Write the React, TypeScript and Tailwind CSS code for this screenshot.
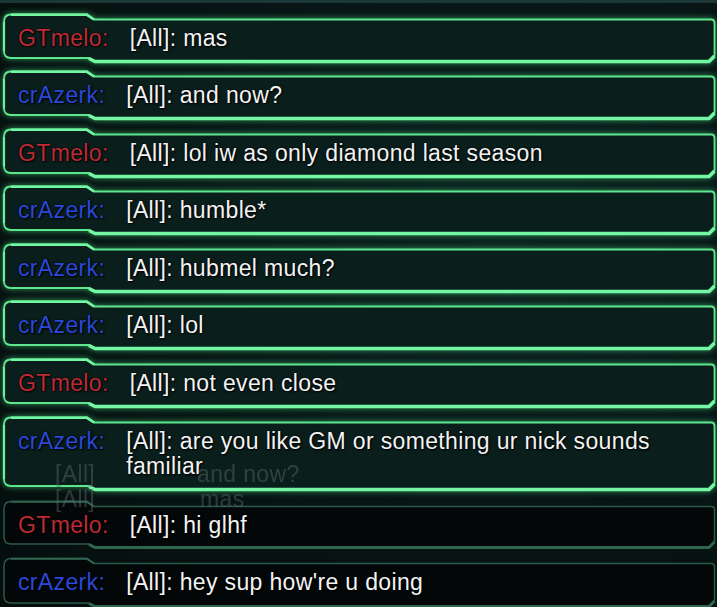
import React from "react";

type Msg = {
  name: string;
  color: "red" | "blue";
  lines: string[];
  mt: number;
  h: number;
  dim?: boolean;
};

const rows: Msg[] = [
  { name: "GTmelo:", color: "red", lines: ["[All]: mas"], mt: 13, h: 51 },
  { name: "crAzerk:", color: "blue", lines: ["[All]: and now?"], mt: 6, h: 51 },
  { name: "GTmelo:", color: "red", lines: ["[All]: lol iw as only diamond last season"], mt: 7, h: 51 },
  { name: "crAzerk:", color: "blue", lines: ["[All]: humble*"], mt: 6, h: 51 },
  { name: "crAzerk:", color: "blue", lines: ["[All]: hubmel much?"], mt: 7, h: 51 },
  { name: "crAzerk:", color: "blue", lines: ["[All]: lol"], mt: 6, h: 51 },
  { name: "GTmelo:", color: "red", lines: ["[All]: not even close"], mt: 7, h: 51 },
  {
    name: "crAzerk:",
    color: "blue",
    lines: ["[All]: are you like GM or something ur nick sounds", "familiar"],
    mt: 7,
    h: 76,
  },
  { name: "GTmelo:", color: "red", lines: ["[All]: hi glhf"], mt: 8, h: 50, dim: true },
  { name: "crAzerk:", color: "blue", lines: ["[All]: hey sup how're u doing"], mt: 7, h: 52, dim: true },
];

const W = 713;

function Frame({ h, dim }: { h: number; dim?: boolean }) {
  const stroke = dim ? "#2b5a48" : "#5ee68e";
  const bar = dim ? "#2f6650" : "#74f7a2";
  const fill = dim ? "#030707" : "#0a1f1c";
  const body = `M 1,9 Q 1,1.5 8,1.5 L 84,1.5 L 91,6.5 L ${W - 5},6.5 Q ${W - 1.5},6.5 ${W - 1.5},10 L ${W - 1.5},${h - 9} L ${W - 7},${h - 2.5} L 92,${h - 2.5} L 86,${h - 6} L 8,${h - 6} Q 1,${h - 6} 1,${h - 13} Z`;
  return (
    <svg
      className={
        "absolute inset-0 overflow-visible " +
        (dim ? "" : "drop-shadow-[0_0_3px_rgba(70,230,130,0.6)]")
      }
      width={W}
      height={h}
      viewBox={`0 0 ${W} ${h}`}
    >
      <path d={body} fill={fill} stroke={stroke} strokeWidth={dim ? 1.5 : 1.8} />
      <path d={`M 8,1.8 L 84,1.8 L 91,6.5`} fill="none" stroke={bar} strokeWidth={dim ? 2 : 2.6} />
      <path
        d={`M 86,${h - 5.5} L 92,${h - 2.5} L ${W - 7},${h - 2.5} L ${W - 1.5},${h - 8}`}
        fill="none"
        stroke={bar}
        strokeWidth={dim ? 3 : 3.6}
        strokeLinejoin="round"
      />
      {!dim && (
        <path d={`M 1,9 L 1,${h - 13}`} fill="none" stroke="#6cf09a" strokeWidth={2.2} />
      )}
    </svg>
  );
}

function Row({ m }: { m: Msg }) {
  return (
    <div
      className="relative ml-[3px] w-[713px] shrink-0"
      style={{ height: m.h, marginTop: m.mt }}
    >
      <Frame h={m.h} dim={m.dim} />
      <div className="relative flex gap-[21px] pl-[15px] pt-[13px] text-[23px] leading-[25px] tracking-[0.35px] [text-shadow:1px_1px_2px_#000,0_0_2px_#000]">
        <span className={m.color === "red" ? "text-[#bd2a35]" : "text-[#2a49d8]"}>{m.name}</span>
        <div className="flex flex-col text-[#f3f3f3]">
          {m.lines.map((l, i) => (
            <span key={i} className="whitespace-nowrap">
              {l}
            </span>
          ))}
        </div>
      </div>
    </div>
  );
}

export default function App() {
  return (
    <div
      className="relative w-[717px] h-[607px] overflow-hidden bg-[#061211] bg-[radial-gradient(ellipse_at_70%_40%,#0c2220_0%,#071413_60%,#050d0d_100%)]"
      style={{ fontFamily: '"Liberation Sans", Arial, sans-serif' }}
    >
      <div className="absolute left-0 right-0 top-0 h-[3px] bg-[#1c3836]" />
      <div className="relative flex flex-col">
        {rows.map((m, i) => (
          <Row key={i} m={m} />
        ))}
      </div>
      {/* fading older messages */}
      <div className="pointer-events-none absolute left-[55px] top-[462px] text-[23px] leading-[25px] tracking-[0.35px] text-[#5d6b69] opacity-45">
        <div className="flex">
          <span className="w-[142px]">[All]</span>
          <span>and now?</span>
        </div>
        <div className="flex">
          <span className="w-[145px]">[All]</span>
          <span>mas</span>
        </div>
      </div>
    </div>
  );
}
